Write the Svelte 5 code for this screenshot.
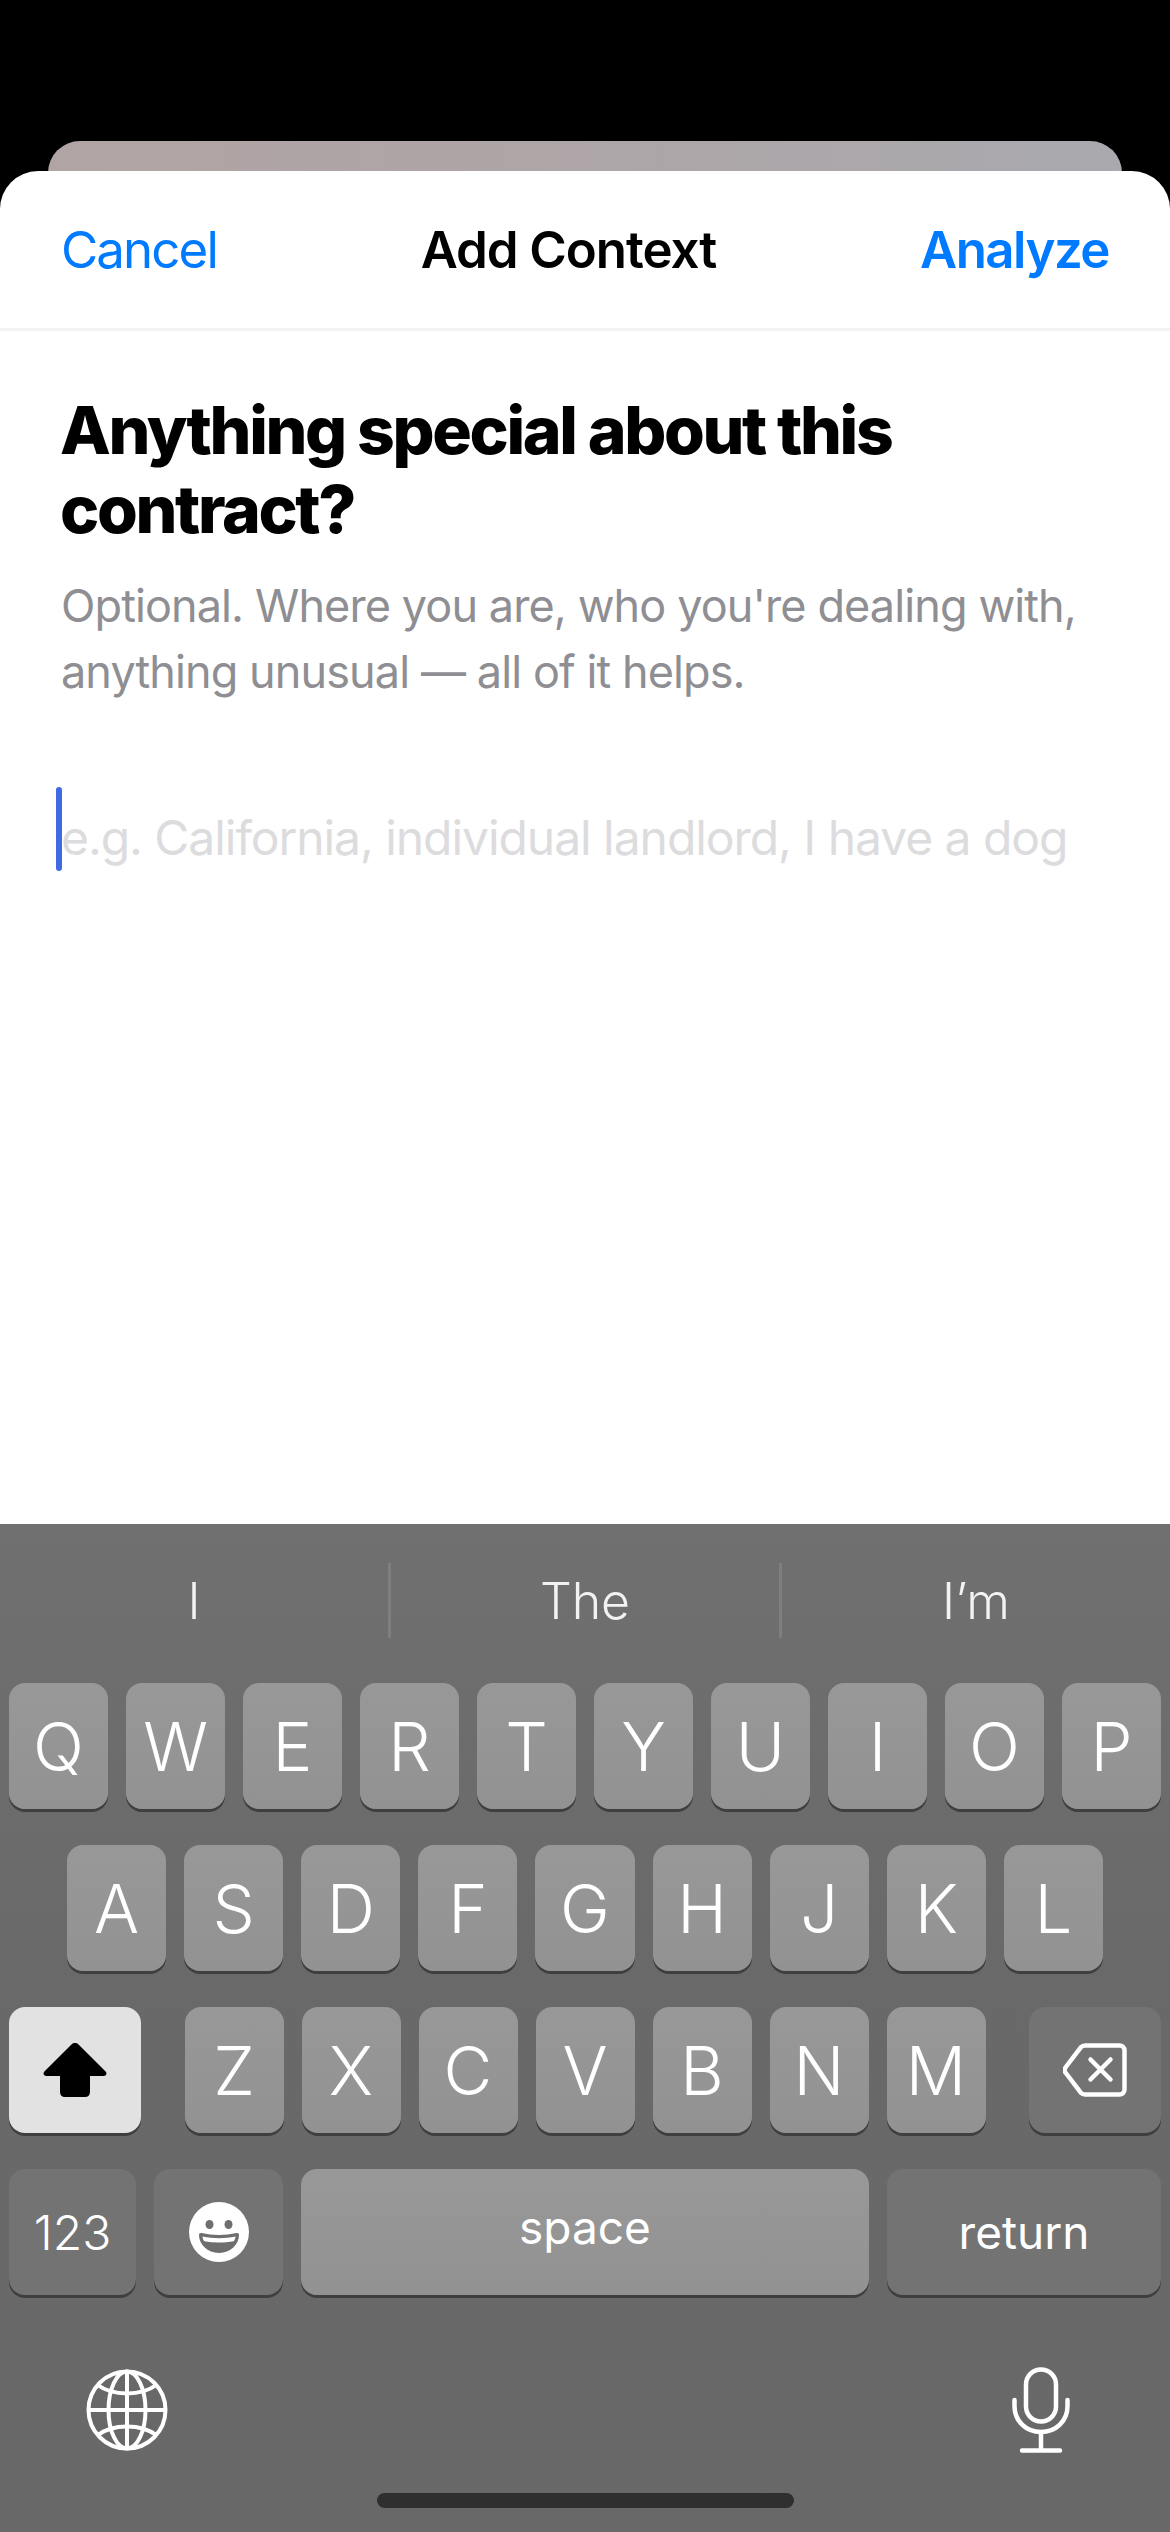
<script>
  const suggestions = ['I', 'The', 'I’m'];
  const row1 = ['Q', 'W', 'E', 'R', 'T', 'Y', 'U', 'I', 'O', 'P'];
  const row2 = ['A', 'S', 'D', 'F', 'G', 'H', 'J', 'K', 'L'];
  const row3 = ['Z', 'X', 'C', 'V', 'B', 'N', 'M'];
</script>

<div class="screen">
  <div class="peek"></div>

  <div class="sheet">
    <header class="nav">
      <span class="nav-btn">Cancel</span>
      <span class="nav-title">Add Context</span>
      <span class="nav-btn strong">Analyze</span>
    </header>

    <main class="body">
      <h1>Anything special about this contract?</h1>
      <p class="hint">Optional. Where you are, who you're dealing with, anything unusual — all of it helps.</p>
      <div class="field">
        <span class="caret"></span>
        <span class="placeholder">e.g. California, individual landlord, I have a dog</span>
      </div>
    </main>
  </div>

  <div class="keyboard">
    <div class="suggestions">
      {#each suggestions as word}
        <div class="suggestion">{word}</div>
      {/each}
    </div>

    <div class="keys">
      <div class="row">
        {#each row1 as k}<div class="key">{k}</div>{/each}
      </div>
      <div class="row inset">
        {#each row2 as k}<div class="key">{k}</div>{/each}
      </div>
      <div class="row split">
        <div class="key shift">
          <svg width="64" height="54" viewBox="0 0 64 54">
            <path fill="#000" d="M28.5 1.5a4.6 4.6 0 0 1 7 0L62.600 28.500c1.800 2 .6 4.500-2 4.500H47v16c0 3-1.800 5-5 5H22c-3.200 0-5-2-5-5V33H3.400c-2.600 0-3.800-2.500-2-4.500z"/>
          </svg>
        </div>
        <div class="letters">
          {#each row3 as k}<div class="key">{k}</div>{/each}
        </div>
        <div class="key dark del">
          <svg width="64" height="54" viewBox="0 0 64 54" fill="none" stroke="#fff" stroke-linecap="round" stroke-linejoin="round">
            <path stroke-width="4.500" d="M22 2.500h34.500a5 5 0 0 1 5 5v39a5 5 0 0 1-5 5H22a6 6 0 0 1-4.200-1.800L3.200 30.500a5 5 0 0 1 0-7L17.800 4.300A6 6 0 0 1 22 2.500z"/>
            <path stroke-width="4.500" d="M27.500 16.500l20 20M47.500 16.500l-20 20"/>
          </svg>
        </div>
      </div>
      <div class="row">
        <div class="key dark num">123</div>
        <div class="key dark emoji">
          <svg width="60" height="60" viewBox="0 0 60 60">
            <circle cx="30" cy="30" r="30" fill="#fff"/>
            <ellipse cx="20.500" cy="22.500" rx="4" ry="4.500" fill="#6e6e6e"/>
            <ellipse cx="39.500" cy="22.500" rx="4" ry="4.500" fill="#6e6e6e"/>
            <path fill="#6e6e6e" d="M10 33c0-1.500 1-2.400 2.500-2 11 2.600 24 2.600 35 0 1.500-.4 2.500.5 2.500 2 0 9.500-8.500 18-20 18S10 42.500 10 33z"/>
            <path fill="#fff" d="M13.500 34.500c10.500 2.200 22.500 2.200 33 0-.2 2-.8 3.500-1.700 4.700-9.500 1.800-20 1.800-29.600 0-.9-1.200-1.500-2.700-1.700-4.700z"/>
          </svg>
        </div>
        <div class="key space">space</div>
        <div class="key dark ret">return</div>
      </div>
    </div>

    <div class="tools">
      <svg width="82" height="82" viewBox="0 0 82 82" fill="none" stroke="#fff" stroke-width="4">
        <circle cx="41" cy="41" r="38.500"/>
        <ellipse cx="41" cy="41" rx="18.500" ry="38.500"/>
        <path d="M41 2.500v77M2.500 41h77"/>
        <path d="M11 15.500c8 6 18 9 30 9s22-3 30-9M11 66.500c8-6 18-9 30-9s22 3 30 9"/>
      </svg>
      <svg class="mic" width="58" height="86" viewBox="0 0 58 86" fill="none" stroke="#fff" stroke-width="4.500" stroke-linecap="round">
        <rect x="14" y="2.500" width="30" height="52" rx="15"/>
        <path d="M2.500 33v6c0 15 11.500 26 26.500 26s26.500-11 26.500-26v-6"/>
        <path d="M29 65v18M10 83.500h38"/>
      </svg>
    </div>

    <div class="home-bar"></div>
  </div>
</div>

<style>
  :global(body) {
    margin: 0;
    background: #000;
  }

  .screen {
    width: 1170px;
    height: 2532px;
    display: flex;
    flex-direction: column;
    padding-top: 141px;
    box-sizing: border-box;
    background: #000;
    overflow: hidden;
    font-family: Inter, "Noto Sans", sans-serif;
  }

  .peek {
    height: 60px;
    margin: 0 48px -30px 48px;
    border-radius: 32px 32px 0 0;
    background: linear-gradient(90deg, #b1a4a4 0%, #aea5a7 45%, #a9a9ae 100%);
    flex: none;
  }

  .sheet {
    position: relative;
    flex: 1;
    background: #fff;
    border-radius: 38px 38px 0 0;
    display: flex;
    flex-direction: column;
  }

  .nav {
    height: 157px;
    border-bottom: 3px solid #f2f2f2;
    padding: 0 61px;
    display: flex;
    align-items: center;
    justify-content: space-between;
    font-size: 51px;
    flex: none;
  }

  .nav-btn {
    color: #007aff;
    letter-spacing: -1.9px;
  }

  .nav-btn.strong {
    font-weight: 600;
    letter-spacing: -1.5px;
  }

  .nav-title {
    color: #000;
    font-weight: 600;
    letter-spacing: -1.05px;
  }

  .body {
    padding: 60px 61px 0;
  }

  h1 {
    margin: 0 0 0 -1px;
    font-size: 66px;
    line-height: 79px;
    font-weight: 800;
    letter-spacing: -2.35px;
    color: #000;
  }

  .hint {
    margin: 24px 0 0;
    font-size: 45px;
    line-height: 66px;
    letter-spacing: -0.9px;
    color: #8e8e93;
  }

  .field {
    margin-top: 82px;
    display: flex;
    align-items: center;
    height: 84px;
  }

  .caret {
    width: 6px;
    height: 84px;
    margin-left: -5px;
    margin-right: -1px;
    border-radius: 3px;
    background: #4169e1;
    flex: none;
  }

  .placeholder {
    padding-top: 16px;
    font-size: 48px;
    letter-spacing: -1.05px;
    color: #dcdcde;
    white-space: nowrap;
  }

  .keyboard {
    height: 1008px;
    flex: none;
    background: linear-gradient(180deg, #707070 0%, #696969 45%, #686868 100%);
  }

  .suggestions {
    height: 159px;
    display: flex;
    align-items: center;
    padding-bottom: 6px;
    box-sizing: border-box;
  }

  .suggestion {
    flex: 1;
    height: 75px;
    display: flex;
    align-items: center;
    justify-content: center;
    font-size: 50px;
    font-weight: 300;
    color: #f2f2f2;
    border-right: 3px solid #7f7f7f;
  }

  .suggestion:last-child {
    border-right: none;
  }

  .keys {
    padding: 0 9px;
    display: flex;
    flex-direction: column;
    gap: 36px;
  }

  .row {
    display: flex;
    gap: 18px;
  }

  .row.inset {
    padding: 0 58px;
  }

  .row.split {
    justify-content: space-between;
  }

  .letters {
    display: flex;
    gap: 18px;
  }

  .key {
    flex: 1;
    height: 126px;
    box-sizing: border-box;
    border-radius: 16px;
    background: linear-gradient(180deg, #989898, #929292);
    box-shadow: 0 3px 0 #3f3f3f;
    color: #fff;
    display: flex;
    align-items: center;
    justify-content: center;
    font-size: 67px;
    font-weight: 300;
  }

  .letters .key {
    flex: none;
    width: 99px;
  }

  .key.dark {
    background: #737373;
  }

  .key.shift {
    flex: none;
    width: 132px;
    background: #e2e2e2;
  }

  .key.del {
    flex: none;
    width: 132px;
  }

  .key.num {
    flex: none;
    width: 127px;
    font-size: 48px;
  }

  .key.emoji {
    flex: none;
    width: 129px;
  }

  .key.space {
    flex: none;
    width: 568px;
    font-size: 46px;
    font-weight: 400;
    padding-bottom: 10px;
  }

  .key.ret {
    flex: none;
    width: 274px;
    font-size: 46px;
    font-weight: 400;
  }

  .tools {
    margin-top: 72px;
    padding: 0 100px 0 86px;
    height: 86px;
    display: flex;
    align-items: center;
    justify-content: space-between;
  }

  .home-bar {
    width: 417px;
    height: 15px;
    margin: 40px auto 0;
    border-radius: 8px;
    background: #2f2f2f;
  }
</style>
